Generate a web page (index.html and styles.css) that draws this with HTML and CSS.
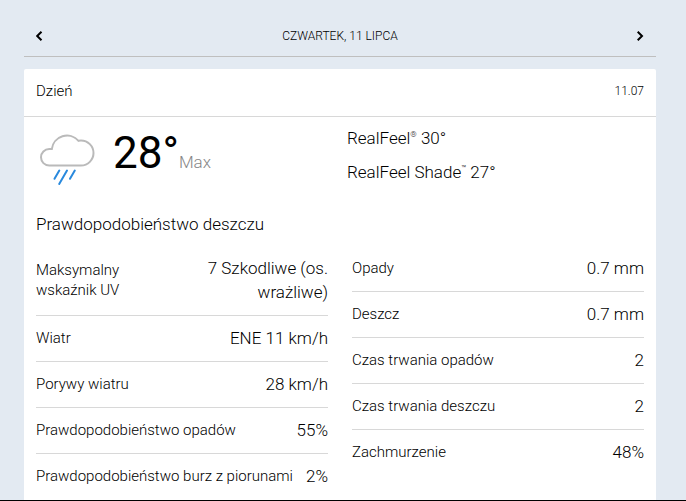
FILE: index.html
```html
<!DOCTYPE html>
<html lang="pl">
<head>
<meta charset="utf-8">
<meta name="viewport" content="width=device-width, initial-scale=1">
<title>Czwartek, 11 lipca</title>
<link rel="stylesheet" href="styles.css">
</head>
<body>
<main class="page">
  <nav class="day-nav">
    <button class="arrow" type="button" aria-label="Poprzedni dzień">
      <svg width="7" height="10" viewBox="0 0 7 10"><path d="M5.500 0.700 1.200 5l4.300 4.300"/></svg>
    </button>
    <h1 class="day-title">CZWARTEK, 11 LIPCA</h1>
    <button class="arrow" type="button" aria-label="Następny dzień">
      <svg width="7" height="10" viewBox="0 0 7 10"><path d="M0.700 0.700 5 5 0.700 9.300"/></svg>
    </button>
  </nav>
  <section class="card">
    <header class="card-header">
      <h2 class="card-title">Dzień</h2>
      <span class="card-date">11.07</span>
    </header>
    <div class="summary">
      <div class="current">
        <svg class="weather-icon" width="56" height="54" viewBox="0 0 56 54" aria-hidden="true">
          <path class="cloud" d="M10.200 32.500H42a12.500 12.500 0 0 0 0-25c-1 0-1.800.1-2.500.3A15.300 15.300 0 0 0 12.800 16.100H10.200a8.200 8.200 0 0 0 0 16.400Z"/>
          <path class="rain" d="M20.300 37.500l-4.800 8.300M28 37.500l-7.800 13.500M35.800 37.500l-4.800 8.300"/>
        </svg>
        <div class="temp">28°<span class="temp-note">Max</span></div>
      </div>
      <div class="feel">
        <p>RealFeel<sup>®</sup> 30°</p>
        <p>RealFeel Shade<sup>™</sup> 27°</p>
      </div>
    </div>
    <p class="phrase">Prawdopodobieństwo deszczu</p>
    <div class="details">
      <dl class="list">
        <div class="row"><dt class="wrap">Maksymalny wskaźnik UV</dt><dd>7 Szkodliwe (os. wrażliwe)</dd></div>
        <div class="row"><dt>Wiatr</dt><dd>ENE 11 km/h</dd></div>
        <div class="row"><dt>Porywy wiatru</dt><dd>28 km/h</dd></div>
        <div class="row"><dt>Prawdopodobieństwo opadów</dt><dd>55%</dd></div>
        <div class="row"><dt>Prawdopodobieństwo burz z piorunami</dt><dd>2%</dd></div>
      </dl>
      <dl class="list">
        <div class="row"><dt>Opady</dt><dd>0.7 mm</dd></div>
        <div class="row"><dt>Deszcz</dt><dd>0.7 mm</dd></div>
        <div class="row"><dt>Czas trwania opadów</dt><dd>2</dd></div>
        <div class="row"><dt>Czas trwania deszczu</dt><dd>2</dd></div>
        <div class="row"><dt>Zachmurzenie</dt><dd>48%</dd></div>
      </dl>
    </div>
  </section>
</main>
</body>
</html>
```
FILE: styles.css
```css
* {
  box-sizing: border-box;
}

body {
  margin: 0;
  background: #e3eaf2;
  color: #000;
  font-family: Roboto, "Liberation Sans", sans-serif;
  font-weight: 300;
}

h1, h2, p, dl, dt, dd {
  margin: 0;
  font-weight: 300;
}

.page {
  padding: 16px 30px 0 24px;
  border-bottom: 1px solid #000;
}

.day-nav {
  display: flex;
  align-items: center;
  justify-content: space-between;
  padding: 0 12px;
  height: 41px;
  border-bottom: 1px solid #bfbfbf;
}

.arrow {
  display: flex;
  padding: 0;
  border: 0;
  background: none;
}

.arrow path {
  fill: none;
  stroke: #000;
  stroke-width: 2;
}

.day-title {
  font-size: 12px;
  line-height: 20px;
}

.card {
  margin-top: 12px;
  padding: 0 12px;
  background: #fff;
  border-radius: 2px 2px 0 0;
}

.card-header {
  display: flex;
  align-items: center;
  justify-content: space-between;
  height: 48px;
  margin: 0 -12px;
  padding: 0 12px 4px;
  border-bottom: 1px solid #d8d8d8;
}

.card-title {
  font-size: 15px;
  line-height: 20px;
}

.card-date {
  font-size: 12px;
  line-height: 20px;
}

.summary {
  display: grid;
  grid-template-columns: 1fr 1fr;
  column-gap: 14px;
  padding-top: 4px;
}

.current {
  display: flex;
  gap: 18px;
  padding: 12px 0 0 3px;
}

.cloud {
  fill: none;
  stroke: #bababa;
  stroke-width: 2;
}

.rain {
  fill: none;
  stroke: #2989dd;
  stroke-width: 2;
  stroke-linecap: round;
}

.temp {
  font-size: 44px;
  line-height: 40px;
  font-weight: 400;
}

.temp-note {
  color: #878787;
  font-size: 17px;
  font-weight: 300;
}

.feel {
  font-size: 17px;
  line-height: 34px;
}

.feel sup {
  font-size: 8px;
  line-height: 0;
}

.phrase {
  padding: 23px 0 10px;
  font-size: 17px;
  line-height: 24px;
}

.details {
  display: grid;
  grid-template-columns: 1fr 1fr;
  column-gap: 24px;
}

.row {
  display: flex;
  align-items: center;
  justify-content: space-between;
  gap: 8px;
  padding: 10px 0 11px;
  border-bottom: 1px solid #d8d8d8;
}

.row:last-child {
  border-bottom-color: transparent;
}

dt {
  font-size: 15px;
  line-height: 20px;
}

dt.wrap {
  flex: 0 1 90px;
}

dd {
  max-width: 130px;
  font-size: 17px;
  line-height: 24px;
  text-align: right;
}
```
